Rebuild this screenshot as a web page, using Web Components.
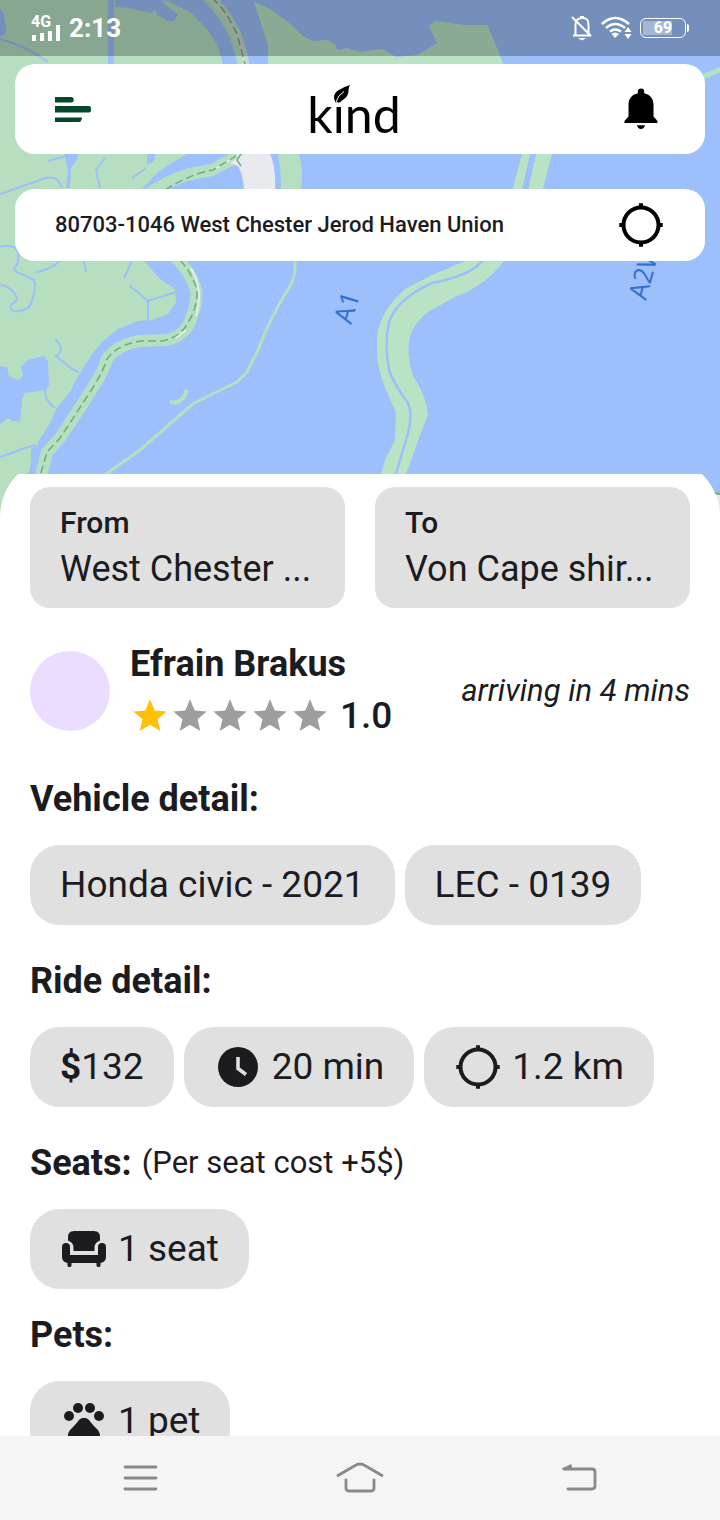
<!DOCTYPE html>
<html lang="en">
<head>
<meta charset="utf-8">
<meta name="viewport" content="width=device-width, initial-scale=1">
<title>Kind ride</title>
<style>
  html, body { margin: 0; height: 100%; }
  body { font-family: Roboto, "Liberation Sans", sans-serif; color: #1c1b1f; background: #fff; }
</style>
</head>
<body>
<ride-app>
  <status-bar slot="status" time="2:13" network="4G" battery="69"></status-bar>
  <app-header slot="top"></app-header>
  <location-bar slot="top" address="80703-1046 West Chester Jerod Haven Union"></location-bar>

  <place-card slot="route" label="From">West Chester ...</place-card>
  <place-card slot="route" label="To">Von Cape shir...</place-card>

  <driver-row name="Efrain Brakus" rating="1.0">arriving in 4 mins</driver-row>

  <detail-section heading="Vehicle detail:">
    <info-chip>Honda civic - 2021</info-chip>
    <info-chip>LEC - 0139</info-chip>
  </detail-section>
  <detail-section heading="Ride detail:">
    <info-chip><b>$</b>132</info-chip>
    <info-chip icon="clock">20 min</info-chip>
    <info-chip icon="target">1.2 km</info-chip>
  </detail-section>
  <detail-section heading="Seats:">
    <span slot="note">(Per seat cost +5$)</span>
    <info-chip icon="chair">1 seat</info-chip>
  </detail-section>
  <detail-section heading="Pets:" compact>
    <info-chip icon="paw">1 pet</info-chip>
  </detail-section>

  <nav-bar slot="nav"></nav-bar>
</ride-app>

<script>
const define = (name, render) => customElements.define(name, class extends HTMLElement {
  constructor() {
    super();
    this.attachShadow({ mode: 'open' });
  }
  connectedCallback() {
    const t = document.createElement('template');
    t.innerHTML = render(this);
    this.shadowRoot.replaceChildren(t.content.cloneNode(true));
  }
});

const ICONS = {
  clock: '<circle cx="24" cy="24" r="20"/><path d="M24 14v11.500l8 6" fill="none" stroke="#e0e0e0" stroke-width="3.600"/>',
  target: '<g fill="none" stroke="currentColor" stroke-width="4"><circle cx="24" cy="24" r="17.500"/><path d="M24 2.300v5M24 40.700v5M2.300 24h5M40.700 24h5"/></g>',
  chair: '<path d="M14 6h20q6 0 6 6v3.500q-5.500 2-5.500 7V26h-21v-3.500q0-5-5.500-7V12q0-6 6-6z"/><path d="M6 18q4 0 4 4v8h28v-8q0-4 4-4t4 4v10q0 5-5.500 6v2.500q0 1.500-2 1.500t-2-1.500V38h-25v2.500q0 1.500-2 1.500t-2-1.500V38Q2 37 2 32V22q0-4 4-4z"/>',
  paw: '<g transform="scale(2)"><circle cx="4.500" cy="9.500" r="2.500"/><circle cx="9" cy="5.500" r="2.500"/><circle cx="15" cy="5.500" r="2.500"/><circle cx="19.500" cy="9.500" r="2.500"/><path d="M17.340 14.860c-.87-1.020-1.600-1.890-2.480-2.910-.46-.54-1.050-1.080-1.750-1.320-.11-.04-.22-.07-.33-.09-.25-.04-.52-.04-.78-.04s-.53 0-.79.05c-.11.02-.22.05-.33.09-.7.24-1.280.78-1.750 1.320-.87 1.020-1.600 1.890-2.480 2.910-1.310 1.310-2.920 2.760-2.620 4.790.29 1.020 1.020 2.030 2.330 2.320.73.15 3.060-.44 5.540-.44h.18c2.480 0 4.810.58 5.540.44 1.310-.29 2.040-1.310 2.330-2.320.31-2.040-1.300-3.490-2.610-4.800z"/></g>',
  bell: '<path d="M24 3.500q3.200 0 3.200 3.200v1.600C33.500 9.800 36.500 14 36.500 20v11.500l4 4.500v2h-33v-2l4-4.500V20c0-6 3-10.200 9.300-11.700V6.700q0-3.200 3.200-3.200zM20 40.300h8q-.8 3.700-4 3.700t-4-3.700z"/>'
};

define('app-icon', el => `
  <style>
    :host { display: block; flex: none; width: 48px; height: 48px; }
    svg { display: block; width: 100%; height: 100%; }
  </style>
  <svg viewBox="0 0 48 48" fill="currentColor" aria-hidden="true">${ICONS[el.getAttribute('name')]}</svg>`);

define('ride-app', () => `
  <style>
    :host { display: flex; flex-direction: column; height: 100vh; position: relative; overflow: hidden; }
    map-view { position: absolute; inset: 0 0 auto 0; z-index: -1; }
    .top { display: flex; flex-direction: column; gap: 35px; padding: 8px 15px 213px; }
    .clip { flex: 1; min-height: 0; overflow: hidden; display: flex; }
    .sheet {
      flex: 1; min-width: 0; box-sizing: border-box; margin-top: -17px; padding: 30px 30px 24px;
      background: #fff; border-radius: 60px 60px 0 0; overflow: hidden auto; scrollbar-width: none;
    }
    .route { display: grid; grid-template-columns: 1fr 1fr; gap: 30px; }
  </style>
  <map-view></map-view>
  <slot name="status"></slot>
  <div class="top"><slot name="top"></slot></div>
  <main class="clip">
    <div class="sheet">
      <div class="route"><slot name="route"></slot></div>
      <slot></slot>
    </div>
  </main>
  <slot name="nav"></slot>`);

define('map-view', () => `
  <style>
    :host { display: block; }
    svg { display: block; width: 100%; height: 520px; }
    text { font: 500 26px "Open Sans", sans-serif; fill: #3370cb; }
  </style>
  <svg viewBox="0 0 720 520" preserveAspectRatio="xMidYMin slice" role="img" aria-label="Map">
    <rect width="720" height="520" fill="#9dbffb"/>
    <g fill="#b6dfc1">
      <path d="M0 0H115V7L128 8 150 13 156 10 157 15 168 21 174 21 178 14 164 4 162 0 167 1 190 12 206 28 217 44 223 64V140L187 154 170 164 158 172 143 188V260L160 279 175 289 176 303 168 314 152 320 138 321 118 329 104 340 93 353 82 370 77 378 70 392 57 408 50 423 38 442 35 460 34 474V520H0z"/>
      <path d="M254 2L270 9 288 22 303 36 312 41 327 40 335 44 337 50 347 48 360 52 382 49 396 57 418 55 437 43 429 26 436 21 464 25 487 25 494 40 503 64V100H268V45z" fill="#bae3c6"/>
      <path d="M278 154Q281 170 281 190H301Q304 170 299 154z"/>
      <path d="M523 150L513 188 483 255 465 261 430 276 405 289Q379 312 377 338V355Q378 376 396 412L395 440 385 460 381 474H406L413 455 420 435 428 415Q427 397 413 376 405 350 411 333 418 319 428 312L455 297Q485 286 504 261L543 188 553 150z" fill="#bae3c6"/>
    </g>
    <path d="M534 150L525 190" stroke="#9dbffb" stroke-width="6"/>
    <path d="M533 150L526 184 504 235 485 258 476 267Q463 277 432 283 397 299 389 322C385 340 386 354 389 370Q395 386 408 403 413 414 408 433L396 474" fill="none" stroke="#9dbffb" stroke-width="2.500"/>
    <g fill="#9dbffb">
      <path d="M108 0H114V64H108zM0 8Q5 14 6 28L5 34 0 37z"/>
      <path d="M0 366L7 367 9 376 18 380 23 376 21 368Q24 361 31 359L45 356 48 362 49 385 46 390 25 393 22 400 20 422 12 421 8 418 0 424z"/>
      <path d="M64 154H78L77 160 71 168 70 188H66L68 170z"/>
      <path d="M147 154H155L154 161 147 165zM31 449l6-3 1 28H28l3-10z"/>
    </g>
    <g fill="none" stroke="#9dbffb" stroke-width="2">
      <path d="M0 39Q26 46 48 62M0 194L46 178Q58 175 62 188M0 247Q15 243 18 253 20 263 14 268 14 272 22 274L34 280Q37 288 30 306 25 312 13 311 8 308 13 303 20 300 14 293 8 285 0 285M36 272Q50 270 60 261M105 158L96 170 100 188M48 161L66 156M132 178L146 168M84 261L86 272M132 261L124 278M130 286L148 301 176 292M148 301V320M55 339Q66 350 56 356L72 369 79 372M45 390Q45 402 55 408M0 457Q12 453 22 449L36 445"/>
    </g>
    <g fill="none" stroke-linejoin="round">
      <path d="M206 -6Q224 12 235 34 243 55 246 80M143 197Q168 180 190 174L212 170 240 155" stroke="#b6dfc1" stroke-width="12"/>
      <path d="M208 -4Q225 12 237 34 244 50 247 80" stroke="#d0d5d6" stroke-width="5"/>
      <path d="M172 254Q191 271 196 290 198 304 188 326 180 338 166 340L140 341Q117 345 107 359 103 372 92 389L70 423 60 438 47 452 41 476" stroke="#b6dfc1" stroke-width="12"/>
      <path d="M191 268Q204 290 196 316M186 330L176 338M215 169L240 154" stroke="#e6ebe8" stroke-width="2"/>
      <path d="M212 -2Q226 10 237 34L245 64M165 190Q190 174 213 170L236 156M180 260Q192 273 197 290 198 308 186 326 178 338 162 341L140 341Q117 345 107 359 103 372 92 389L70 423 60 438 47 452 40 476" stroke="#6bb07a" stroke-width="1.500" stroke-dasharray="8 4"/>
      <path d="M295 255Q296 276 291 284 270 318 258 350L247 372 237 382 194 403 140 450 102 477" stroke="#b6dfc1" stroke-width="3"/>
      <path d="M170 402Q182 405 187 390" stroke="#b6dfc1" stroke-width="4"/>
      <path d="M700 78L722 69" stroke="#b6dfc1" stroke-width="5"/>
    </g>
    <path d="M243 154H270Q276 166 275 190H244Q243 174 238 166L230 163z" fill="#e8eaed"/>
    <path d="M241 154l-4 6 4 6" fill="none" stroke="#6bb07a" stroke-width="1.500"/>
    <path d="M700 493H720V520H700z" fill="#e8eaed"/>
    <path d="M700 491L720 494" stroke="#6bb07a" stroke-width="2"/>
    <text transform="translate(351 325) rotate(-73)">A1</text>
    <text transform="translate(646 301) rotate(-75)">A2W</text>
  </svg>`);

define('status-bar', el => `
  <style>
    :host { display: flex; flex: none; align-items: center; justify-content: space-between; height: 56px; box-sizing: border-box; padding: 0 34px 0 31px; background: rgba(0,0,0,.25); color: #fff; font-weight: 700; }
    .left, .right { display: flex; align-items: center; gap: 8px; }
    .signal { display: flex; align-items: flex-end; }
    .net { display: grid; }
    .net span { font-size: 16px; line-height: 14px; }
    svg { display: block; }
    time { font-size: 26px; line-height: 32px; }
    .battery { position: relative; display: grid; place-items: center; width: 46px; height: 20px; box-sizing: border-box; border: 1px solid #fff; border-radius: 6px; font-size: 16px; line-height: 18px; background: linear-gradient(#a6b6d3, #a6b6d3) 2px 2px / 29px 14px no-repeat; }
    .battery::after { content: ""; position: absolute; right: -4px; top: 5px; width: 2px; height: 8px; background: #fff; border-radius: 0 2px 2px 0; }
  </style>
  <div class="left">
    <div class="signal">
      <div class="net"><span>${el.getAttribute('network')}</span>
        <svg width="22" height="12" fill="#fff"><path d="M1 6h4v6h-4zM9 4h4v8H9zM17 2h4v10h-4z"/></svg></div>
      <svg width="8" height="18" fill="#fff"><path d="M3 2h4v16H3z"/></svg>
    </div>
    <time>${el.getAttribute('time')}</time>
  </div>
  <div class="right">
    <svg width="22" height="26" viewBox="0 0 22 26" fill="none" stroke="#fff" stroke-width="2"><path d="M2 20.500h18M4.500 20V9.500q0-6 6.500-6.500t6.500 6.500V20M1 2l19 19"/><path d="M7 23h8l-4 2.500z" fill="#fff" stroke="none"/><path d="M9 2h4"/></svg>
    <svg width="31" height="24" viewBox="0 0 31 24" fill="none" stroke="#fff" stroke-width="2.600"><path d="M1 8Q14-4 28 8M5 12Q14 4 24 12M9 15.500Q14 11.500 20 15.500"/><path d="M10.500 18Q14 15 18 18l-4 4zM27 11l3.500 5h-7zM27 23l3.500-5h-7z" fill="#fff" stroke="none"/></svg>
    <span class="battery">${el.getAttribute('battery')}</span>
  </div>`);

define('app-header', () => `
  <style>
    :host { display: flex; align-items: center; justify-content: space-between; height: 90px; box-sizing: border-box; padding: 0 40px; background: #fff; border-radius: 20px; color: #000; }
    button { display: flex; padding: 0; border: 0; background: none; color: inherit; }
    .logo { position: relative; font: 50px/60px Lato, sans-serif; padding-top: 10px; }
    .logo svg { position: absolute; left: 27px; top: 11px; }
  </style>
  <button aria-label="Menu"><svg width="36" height="26" viewBox="0 0 36 26" fill="#04492b"><path d="M0 1H16a2.500 2.500 0 0 1 0 5.500H0zM0 10H34a2 2 0 0 1 2 2v2.500a2 2 0 0 1-2 2H0zM0 21.500H27q-.5 4.500-3 4.500H0z"/></svg></button>
  <div class="logo">kind<svg width="16" height="18" viewBox="0 0 16 18" aria-hidden="true"><path d="M16 0Q9 2 4 5.500C-1 9-.5 13 1.500 17.500 8 17 14.500 12 14.500 6 14.500 3 16 0 16 0z"/><path d="M2 17Q4 10 10 6.500" fill="none" stroke="#fff" stroke-width="1"/></svg></div>
  <button aria-label="Notifications"><app-icon name="bell"></app-icon></button>`);

define('location-bar', el => `
  <style>
    :host { display: flex; align-items: center; height: 72px; box-sizing: border-box; padding: 0 40px; background: #fff; border-radius: 20px; }
    input { flex: 1; min-width: 0; padding: 0; border: 0; outline: 0; background: none; font: 500 22px/32px Roboto, sans-serif; color: inherit; }
    button { padding: 0; border: 0; background: none; color: #000; }
  </style>
  <input type="text" aria-label="Current location" value="${el.getAttribute('address')}">
  <button aria-label="Locate me"><app-icon name="target"></app-icon></button>`);

define('place-card', el => `
  <style>
    :host { display: block; min-width: 0; box-sizing: border-box; padding: 18px 30px 15px; background: #e0e0e0; border-radius: 20px; }
    h3 { margin: 0; font-size: 30px; line-height: 36px; font-weight: 500; }
    p { margin: 4px 0 0; font-size: 36px; line-height: 48px; white-space: nowrap; }
  </style>
  <h3>${el.getAttribute('label')}</h3><p><slot></slot></p>`);

define('driver-row', el => `
  <style>
    :host { display: flex; align-items: center; gap: 20px; margin-top: 31px; }
    .avatar { flex: none; width: 80px; height: 80px; border-radius: 50%; background: #eaddff; }
    .who { flex: 1; }
    h2 { margin: 0; font-size: 36px; line-height: 50px; font-weight: 700; }
    em { font-size: 31px; line-height: 36px; }
  </style>
  <div class="avatar"></div>
  <div class="who"><h2>${el.getAttribute('name')}</h2><star-rating value="${el.getAttribute('rating')}"></star-rating></div>
  <em><slot></slot></em>`);

define('star-rating', el => `
  <style>
    :host { display: flex; align-items: center; height: 54px; font-size: 37px; line-height: 54px; font-weight: 500; }
    svg { width: 40px; height: 40px; fill: #9e9e9e; }
    svg.on { fill: #ffc107; }
    span { margin-left: 10px; }
  </style>
  ${[1, 2, 3, 4, 5].map(n => `<svg class="${n <= +el.getAttribute('value') ? 'on' : ''}" viewBox="0 0 24 24" aria-hidden="true"><path d="M12 17.270 18.180 21l-1.640-7.030L22 9.240l-7.190-.61L12 2 9.190 8.630 2 9.240l5.460 4.730L5.820 21z"/></svg>`).join('')}
  <span>${el.getAttribute('value')}</span>`);

define('detail-section', el => `
  <style>
    :host { display: block; margin-top: 32px; }
    :host([compact]) { margin-top: 22px; }
    header { display: flex; align-items: center; gap: 10px; margin-bottom: 22px; }
    h2 { margin: 0; font-size: 36px; line-height: 48px; font-weight: 700; }
    ::slotted([slot="note"]) { font-size: 31px; line-height: 48px; }
    .chips { display: flex; flex-wrap: wrap; gap: 10px; }
  </style>
  <header><h2>${el.getAttribute('heading')}</h2><slot name="note"></slot></header>
  <div class="chips"><slot></slot></div>`);

define('info-chip', el => `
  <style>
    :host { display: flex; align-items: center; gap: 10px; height: 80px; box-sizing: border-box; padding: 0 30px; border-radius: 30px; background: #e0e0e0; font-size: 37px; line-height: 48px; white-space: nowrap; }
  </style>
  ${el.hasAttribute('icon') ? `<app-icon name="${el.getAttribute('icon')}"></app-icon>` : ''}<span><slot></slot></span>`);

define('nav-bar', () => `
  <style>
    :host { display: block; flex: none; background: #f5f5f5; }
    nav { display: grid; grid-template-columns: repeat(3, 1fr); place-items: center; height: 84px; padding: 0 30px; }
    button { padding: 0; border: 0; background: none; }
    svg { display: block; fill: none; stroke: #898989; stroke-linecap: round; stroke-linejoin: round; }
  </style>
  <nav aria-label="System">
    <button aria-label="Recent apps"><svg width="48" height="36" viewBox="0 0 48 36"><path d="M9 7H40M9 18H40M9 29H40" stroke-width="2.800"/></svg></button>
    <button aria-label="Home"><svg width="48" height="36" viewBox="0 0 48 36"><path d="M2 15.500L20 5q4-2 8 0L46 15.500M10 20v8q0 3 3 3H35q3 0 3-3v-8" stroke-width="2.800"/></svg></button>
    <button aria-label="Back"><svg width="48" height="36" viewBox="0 0 48 36"><path d="M8 9H36q3 0 3 3V26q0 3-3 3H12" stroke-width="2.800"/><path d="M7 9l8-4v4z" stroke-width="1.500" fill="#898989"/></svg></button>
  </nav>`);
</script>
</body>
</html>
